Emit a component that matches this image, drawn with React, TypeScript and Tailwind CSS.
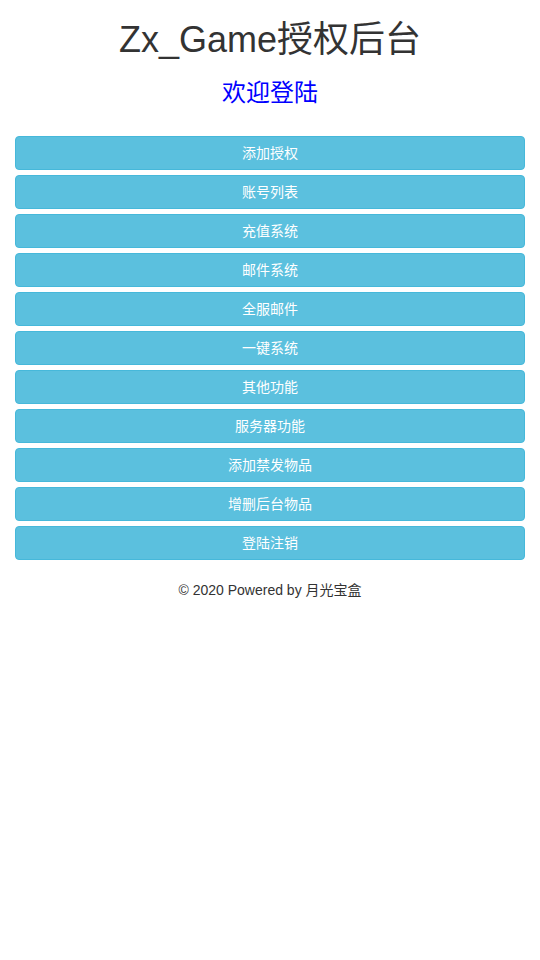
const menu = [
  '添加授权',
  '账号列表',
  '充值系统',
  '邮件系统',
  '全服邮件',
  '一键系统',
  '其他功能',
  '服务器功能',
  '添加禁发物品',
  '增删后台物品',
  '登陆注销',
];

export default function App() {
  return (
    <div
      className="min-h-[960px] bg-white px-[15px] text-[14px] leading-[20px] text-[#333]"
      style={{ fontFamily: '"Liberation Sans", Arial, "Noto Sans CJK SC", sans-serif' }}
    >
      <h1 className="pt-5 text-center text-[36px] leading-[39.6px] font-normal">Zx_Game授权后台</h1>
      <h3 className="mt-5 text-center text-[24px] leading-[26.4px] font-normal text-[#0000ff]">欢迎登陆</h3>

      {/* Menu */}
      <div className="mt-[30px] flex flex-col gap-[5px]">
        {menu.map((item) => (
          <button
            key={item}
            type="button"
            className="h-[34px] w-full rounded-[4px] border border-[#46b8da] bg-[#5bc0de] text-center text-[14px] leading-[20px] text-white"
          >
            {item}
          </button>
        ))}
      </div>

      <p className="mt-5 text-center">© 2020 Powered by 月光宝盒</p>
    </div>
  );
}
